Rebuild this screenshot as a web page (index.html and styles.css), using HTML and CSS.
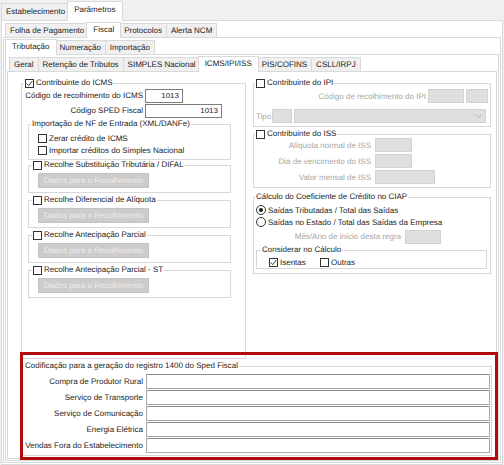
FILE: index.html
```html
<!DOCTYPE html>
<html lang="pt-BR">
<head>
<meta charset="utf-8">
<title>Parâmetros - Fiscal</title>
<link rel="stylesheet" href="styles.css">
</head>
<body>
<div class="app">
  <div class="tabs tabs-top">
    <span class="tab">Estabelecimento</span>
    <span class="tab sel">Parâmetros</span>
  </div>
  <div class="page">
    <div class="tabs">
      <span class="tab">Folha de Pagamento</span>
      <span class="tab sel">Fiscal</span>
      <span class="tab">Protocolos</span>
      <span class="tab">Alerta NCM</span>
    </div>
    <div class="page">
      <div class="tabs">
        <span class="tab sel">Tributação</span>
        <span class="tab">Numeração</span>
        <span class="tab">Importação</span>
      </div>
      <div class="page">
        <div class="tabs">
          <span class="tab">Geral</span>
          <span class="tab">Retenção de Tributos</span>
          <span class="tab">SIMPLES Nacional</span>
          <span class="tab sel">ICMS/IPI/ISS</span>
          <span class="tab">PIS/COFINS</span>
          <span class="tab">CSLL/IRPJ</span>
        </div>
        <div class="page sheet">
          <div class="cols">
            <fieldset class="grp icms">
              <legend><span class="cb"><svg viewBox="0 0 7 7"><path d="M0.6 3.4 L2.7 5.6 L6.4 1" fill="none" stroke="#222" stroke-width="0.9"/></svg></span>Contribuinte do ICMS</legend>
              <div class="gb">
                <div class="frow"><span class="flbl">Código de recolhimento do ICMS</span><input class="inp w-cod" value="1013" readonly></div>
                <div class="frow"><span class="flbl">Código SPED Fiscal</span><input class="inp w-sped" value="1013" readonly></div>
                <fieldset class="grp sub imp">
                  <legend>Importação de NF de Entrada (XML/DANFe)</legend>
                  <div class="gb">
                    <div class="chk"><span class="cb"></span>Zerar crédito de ICMS</div>
                    <div class="chk"><span class="cb"></span>Importar créditos do Simples Nacional</div>
                  </div>
                </fieldset>
                <fieldset class="grp sub rec">
                  <legend><span class="cb"></span>Recolhe Substituição Tributária / DIFAL</legend>
                  <div class="gb"><span class="btn">Dados para o Recolhimento</span></div>
                </fieldset>
                <fieldset class="grp sub rec">
                  <legend><span class="cb"></span>Recolhe Diferencial de Alíquota</legend>
                  <div class="gb"><span class="btn">Dados para o Recolhimento</span></div>
                </fieldset>
                <fieldset class="grp sub rec">
                  <legend><span class="cb"></span>Recolhe Antecipação Parcial</legend>
                  <div class="gb"><span class="btn">Dados para o Recolhimento</span></div>
                </fieldset>
                <fieldset class="grp sub rec">
                  <legend><span class="cb"></span>Recolhe Antecipação Parcial - ST</legend>
                  <div class="gb"><span class="btn">Dados para o Recolhimento</span></div>
                </fieldset>
              </div>
            </fieldset>

            <div class="right">
              <fieldset class="grp ipi">
                <legend><span class="cb"></span>Contribuinte do IPI</legend>
                <div class="gb">
                  <div class="frow"><span class="flbl dis">Código de recolhimento do IPI</span><input class="inp dis w36" disabled><input class="inp dis w22" disabled></div>
                  <div class="frow tipo"><span class="tipo-lbl dis">Tipo</span><input class="inp dis w20" disabled><span class="combo"><svg viewBox="0 0 7 4"><path d="M0.5 0.5 L3.5 3.5 L6.5 0.5" fill="none" stroke="#a8a8a8" stroke-width="0.8"/></svg></span></div>
                </div>
              </fieldset>

              <fieldset class="grp iss">
                <legend><span class="cb"></span>Contribuinte do ISS</legend>
                <div class="gb">
                  <div class="frow"><span class="flbl dis">Alíquota normal de ISS</span><input class="inp dis w37" disabled></div>
                  <div class="frow"><span class="flbl dis">Dia de vencimento do ISS</span><input class="inp dis w37" disabled></div>
                  <div class="frow"><span class="flbl dis">Valor mensal de ISS</span><input class="inp dis w60" disabled></div>
                </div>
              </fieldset>

              <fieldset class="grp ciap">
                <legend>Cálculo do Coeficiente de Crédito no CIAP</legend>
                <div class="gb">
                  <div class="radio"><span class="rd on"></span>Saídas Tributadas / Total das Saídas</div>
                  <div class="radio"><span class="rd"></span>Saídas no Estado / Total das Saídas da Empresa</div>
                  <div class="frow mes"><span class="flbl dis">Mês/Ano de início desta regra</span><input class="inp dis w36" disabled></div>
                  <fieldset class="grp cons">
                    <legend>Considerar no Cálculo</legend>
                    <div class="gb">
                      <div class="chk isentas"><span class="cb"><svg viewBox="0 0 7 7"><path d="M0.6 3.4 L2.7 5.6 L6.4 1" fill="none" stroke="#222" stroke-width="0.9"/></svg></span>Isentas</div>
                      <div class="chk"><span class="cb"></span>Outras</div>
                    </div>
                  </fieldset>
                </div>
              </fieldset>
            </div>
          </div>

          <fieldset class="grp sped">
            <legend>Codificação para a geração do registro 1400 do Sped Fiscal</legend>
            <div class="gb">
              <div class="frow"><span class="flbl">Compra de Produtor Rural</span><input class="inp" readonly></div>
              <div class="frow"><span class="flbl">Serviço de Transporte</span><input class="inp" readonly></div>
              <div class="frow"><span class="flbl">Serviço de Comunicação</span><input class="inp" readonly></div>
              <div class="frow"><span class="flbl">Energia Elétrica</span><input class="inp" readonly></div>
              <div class="frow"><span class="flbl">Vendas Fora do Estabelecimento</span><input class="inp" readonly></div>
            </div>
          </fieldset>
        </div>
      </div>
    </div>
  </div>
  <div class="mark"></div>
</div>
</body>
</html>
```

FILE: styles.css
```css
* { box-sizing: border-box; }
html, body { margin: 0; padding: 0; }
body {
  width: 504px;
  height: 465px;
  overflow: hidden;
  background: #f0f0f0;
  font-family: "Liberation Sans", Arial, sans-serif;
  font-size: 8px;
  line-height: 11px;
  color: #1c1c1c;
  text-rendering: geometricPrecision;
}
.app {
  position: relative;
  height: 465px;
  padding: 0 1px;
  display: flex;
  flex-direction: column;
}

/* tabs */
.tabs {
  flex: none;
  display: flex;
  align-items: flex-end;
  height: 16px;
  padding-left: 2px;
}
.tabs-top { height: 20px; padding-left: 0; }
.tab {
  height: 14px;
  line-height: 13px;
  padding: 0 4px;
  margin-right: -1px;
  background: #f0f0f0;
  border: 1px solid #d9d9d9;
  border-bottom: 0;
  white-space: nowrap;
}
.tabs-top .tab { height: 17px; line-height: 16px; }
.tab.sel {
  position: relative;
  z-index: 2;
  height: 16px;
  line-height: 13px;
  margin: 0 -2px -1px -2px;
  padding: 0 6px;
  background: #fff;
}
.tabs-top .tab.sel { height: 20px; line-height: 16px; }

/* pages */
.page {
  flex: 1;
  min-height: 0;
  display: flex;
  flex-direction: column;
  background: #fff;
  border: 1px solid #d9d9d9;
  padding: 0 1px 1px 1px;
}
.sheet { display: block; padding: 6px 0 0 13px; }

/* group boxes */
.grp {
  margin: 0;
  padding: 0;
  min-width: 0;
  border: 1px solid #d8d8d8;
}
.grp > legend {
  display: flex;
  align-items: center;
  height: 10px;
  line-height: 10px;
  padding: 0 1px;
  margin-left: 1px;
  white-space: nowrap;
}
.cb {
  flex: none;
  display: inline-flex;
  align-items: center;
  justify-content: center;
  width: 9px;
  height: 9px;
  margin-right: 2px;
  border: 1px solid #333;
  background: #fff;
}
.cb svg { width: 7px; height: 7px; }
.chk { display: flex; align-items: center; height: 12px; white-space: nowrap; }

.frow { display: flex; align-items: center; white-space: nowrap; }
.flbl { flex: none; text-align: right; }

.inp {
  display: block;
  flex: none;
  height: 14px;
  margin: 0;
  padding: 0 3px;
  border: 1px solid #7d7d7d;
  border-radius: 0;
  background: #fff;
  font: inherit;
  color: inherit;
  text-align: right;
  outline: none;
}
.dis { color: #a6a6a6; }
.inp.dis { background: #dfdfdf; border-color: #d2d2d2; }

/* layout */
.cols { display: flex; align-items: flex-start; gap: 7px; }

/* ICMS */
.icms { width: 225px; }
.icms > legend { margin-left: 2px; }
.icms > .gb { padding-bottom: 60px; }
.icms .frow { height: 15px; }
.icms .frow .flbl { width: 122px; padding-right: 1px; }
.icms .frow .inp { margin-left: 1px; }
.w-cod { width: 38px; }
.w-sped { width: 77px; }

.sub { margin-left: 6px; width: 203px; }
.sub > legend { margin-left: 2px; }
.imp { margin-top: 1px; }
.imp .gb { padding: 3px 0 3px 9px; }
.rec > legend { margin-left: 3px; }
.rec .gb { padding: 3px 0 4px 9px; }
.rec + .rec { margin-top: 2px; }
.btn {
  display: block;
  width: 111px;
  height: 15px;
  line-height: 13px;
  text-align: center;
  white-space: nowrap;
  background: #cccccc;
  border: 1px solid #c3c3c3;
  color: #ececec;
}

/* right column */
.right { width: 238px; display: flex; flex-direction: column; }

.ipi .gb { padding: 1px 0 3px 0; }
.ipi .frow { height: 14px; }
.ipi .flbl { width: 172px; }
.ipi .frow .inp { margin-left: 2px; }
.w36 { width: 36px; }
.w22 { width: 22px; }
.tipo { margin-top: 6px; }
.tipo-lbl { flex: none; width: 18px; padding-left: 2px; }
.ipi .tipo .w20 { width: 20px; margin-left: 0; }
.combo {
  flex: none;
  display: flex;
  align-items: center;
  justify-content: flex-end;
  width: 192px;
  height: 14px;
  margin-left: 2px;
  padding-right: 3px;
  background: #dfdfdf;
  border: 1px solid #d2d2d2;
}
.combo svg { width: 7px; height: 4px; }

.iss { margin-top: 2px; }
.iss .gb { margin-top: -1px; padding: 0 0 3px 0; }
.iss .frow { height: 14px; margin-bottom: 2px; }
.iss .frow:last-child { margin-bottom: 0; }
.iss .flbl { width: 117px; }
.iss .inp { margin-left: 4px; }
.w37 { width: 37px; }
.w60 { width: 60px; }

.ciap { margin-top: 4px; }
.ciap .gb { padding: 2px 0 4px 0; }
.radio { display: flex; align-items: center; height: 12px; padding-left: 2px; white-space: nowrap; }
.rd {
  flex: none;
  display: flex;
  align-items: center;
  justify-content: center;
  width: 10px;
  height: 10px;
  margin-right: 2px;
  border: 1px solid #333;
  border-radius: 50%;
  background: #fff;
}
.rd.on::after {
  content: "";
  width: 4px;
  height: 4px;
  border-radius: 50%;
  background: #1c1c1c;
}
.mes { height: 15px; margin-top: 1px; }
.mes .flbl { width: 147px; }
.mes .inp { margin-left: 4px; }
.cons { margin: 1px 0 0 2px; width: 231px; }
.cons > legend { margin-left: 4px; }
.cons .gb { display: flex; padding: 1px 0 0 12px; }
.isentas { width: 51px; }

/* bottom */
.sped { margin-top: 2px; width: 471px; }
.sped > legend { margin-left: 2px; }
.sped .gb { padding: 3px 0 2px 0; }
.sped .frow { height: 15px; margin-bottom: 1px; }
.sped .frow:last-child { margin-bottom: 0; }
.sped .flbl { width: 122px; padding-right: 1px; }
.sped .inp {
  width: 344px;
  height: 15px;
  margin-left: 2px;
  border: 1px solid #a8a8a8;
  border-top-color: #8e8e8e;
}

/* annotation */
.mark {
  position: absolute;
  left: 20px;
  top: 352px;
  width: 478px;
  height: 108px;
  border: 3px solid #b20b0b;
  pointer-events: none;
}
```
